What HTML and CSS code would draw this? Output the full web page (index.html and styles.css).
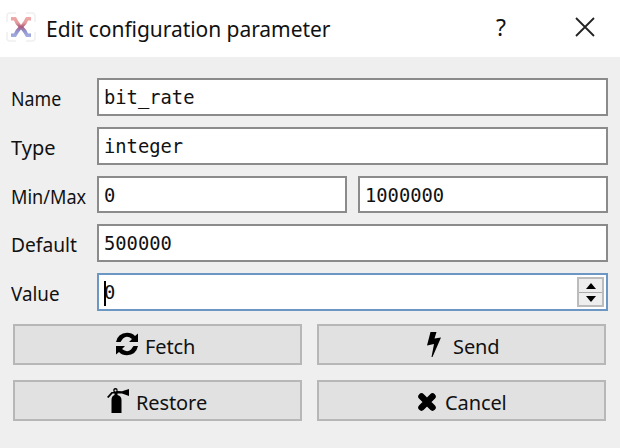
FILE: index.html
```html
<!DOCTYPE html>
<html lang="en">
<head>
<meta charset="utf-8">
<title>Edit configuration parameter</title>
<link rel="stylesheet" href="styles.css">
</head>
<body>
<div class="dialog">
  <header class="titlebar">
    <svg class="logo" viewBox="0 0 30 30">
      <defs><linearGradient id="x" x1="0" y1="0" x2="0" y2="1"><stop offset="0" stop-color="#f0aaa8"/><stop offset=".3" stop-color="#e39a9c"/><stop offset=".5" stop-color="#a9587a"/><stop offset=".7" stop-color="#9094cf"/><stop offset="1" stop-color="#a5afe0"/></linearGradient></defs>
      <path d="M1 10V4Q1 1 4 1H10M20 1H26Q29 1 29 4V10M29 20V26Q29 29 26 29H20M10 29H4Q1 29 1 26V20" fill="none" stroke="#f0f0f0" stroke-width="1.6"/>
      <path d="M5 5H10Q12 9 15 13Q18 9 20 5H25V8.500H22Q21 12 17.500 15Q21 18 22 21.500H25V25H20Q18 21 15 17.500Q12 21 10 25H5V21.500H8Q9 18 12.500 15Q9 12 8 8.500H5Z" fill="url(#x)"/>
    </svg>
    <h1 class="title">Edit configuration parameter</h1>
    <span class="help">?</span>
    <svg class="close" viewBox="0 0 20 20"><path d="M1 1L19 19M19 1L1 19" stroke="#222" stroke-width="1.800"/></svg>
  </header>
  <main class="content">
    <div class="form">
      <div class="row"><label class="name-label">Name</label><div class="field">bit_rate</div></div>
      <div class="row"><label class="type-label">Type</label><div class="field">integer</div></div>
      <div class="row"><label class="range-label">Min/Max</label><div class="field">0</div><div class="field">1000000</div></div>
      <div class="row"><label class="default-label">Default</label><div class="field">500000</div></div>
      <div class="row"><label class="value-label">Value</label><div class="field active">0<i class="caret"></i>
        <div class="spinner"><span><svg viewBox="0 0 10 6"><path d="M0 6L5 0L10 6Z"/></svg></span><span><svg viewBox="0 0 10 6"><path d="M0 0H10L5 6Z"/></svg></span></div>
      </div></div>
    </div>
    <div class="buttons">
      <div class="button fetch">
        <svg width="24" height="24" viewBox="0 0 24 24"><path d="M1 10Q3 1 12 .8Q17 .8 20 4L23 1.500V10H14L17 7Q12 3 8 6.500L5.500 10ZM1 22.500V14H10L7 17Q12 21 16 17.500L18.500 14H23Q21 23 12 23.200Q7 23.200 4 20Z"/></svg><span>Fetch</span>
      </div>
      <div class="button send">
        <svg width="14" height="25" viewBox="0 0 14 25"><path d="M3.500 0H9.500L7.500 6.500L14 5.500L5.500 25H4.500L7 12L0 13.500Z"/></svg><span>Send</span>
      </div>
      <div class="button restore">
        <svg width="22" height="25" viewBox="0 0 22 25"><path d="M4.500 12Q4.500 8 7.500 7V5.500H5.500L1.500 10L0 9L4.500 4H6.500Q5.500 0 8.500 0Q11 0 10.500 3L15 3.200L22 1V8L15 5.500H10.500V7Q14.500 8 14.500 12V25H4.500Z"/><circle cx="8.500" cy="2.500" r="1" fill="#e1e1e1"/></svg><span>Restore</span>
      </div>
      <div class="button cancel">
        <svg width="18" height="18" viewBox="0 0 18 18"><path d="M3.500 3.500L14.500 14.500M14.500 3.500L3.500 14.500" stroke="#000" stroke-width="6.500" stroke-linecap="round"/></svg><span>Cancel</span>
      </div>
    </div>
  </main>
</div>
</body>
</html>
```
FILE: styles.css
```css
* { box-sizing: border-box; }
body { margin: 0; font-family: "Noto Sans", sans-serif; font-size: 20px; color: #111; }
svg { display: block; flex: none; }
.dialog { width: 620px; height: 448px; background: #efefef; overflow: hidden; }
.titlebar { height: 57px; background: #fff; display: flex; align-items: center; padding: 0 25px 3px 6px; }
.logo { width: 30px; height: 30px; }
.title { margin: 0 0 0 10px; padding-top: 3px; width: 450px; font-size: 21px; font-weight: 400; white-space: nowrap; letter-spacing: -.05px; }
.help { width: 14px; font-size: 23px; }
.close { width: 20px; height: 20px; margin-left: auto; }
.content { padding: 21px 12px 0 11px; }
.form { display: grid; gap: 11px; }
.row { display: flex; gap: 11px; height: 37.800px; }
.row label { width: 86px; margin-right: -11px; flex: none; line-height: 41px; white-space: nowrap; transform-origin: left; }
.name-label { transform: scaleX(.89); }
.range-label { transform: scaleX(.905); }
.default-label { transform: scaleX(.96); }
.value-label { transform: scaleX(.94); }
.field { position: relative; flex: 1; border: 2px solid #8b8b8b; background: #fff; padding-left: 5px; font: 18.800px/35px "DejaVu Sans Mono", monospace; white-space: nowrap; }
.active { border-color: #6c96c3; }
.caret { position: absolute; left: 5px; top: 6px; width: 2px; height: 25px; background: #000; }
.spinner { position: absolute; right: 2px; top: 2px; width: 27px; height: 30px; border: 2px solid #bcbcbc; display: grid; grid-template-rows: 1fr 1fr; }
.spinner span { display: grid; place-items: center; background: #eee; }
.spinner span + span { border-top: 1px solid #aaa; }
.spinner svg { width: 10px; height: 6px; }
.buttons { display: grid; grid-template-columns: 289px 289px; column-gap: 15px; row-gap: 15px; margin: 13px 0 0 2px; }
.button { display: flex; align-items: center; height: 41px; border: 2px solid #b7b7b7; background: #e1e1e1; }
.fetch { padding-left: 100px; gap: 6px; }
.send { padding-left: 108px; gap: 12px; }
.restore { padding-left: 92px; gap: 7px; }
.cancel { padding-left: 99px; gap: 9px; }
.cancel svg { margin-top: 3px; }
.button span { line-height: 36px; padding-top: 5px; letter-spacing: -.1px; }
```
